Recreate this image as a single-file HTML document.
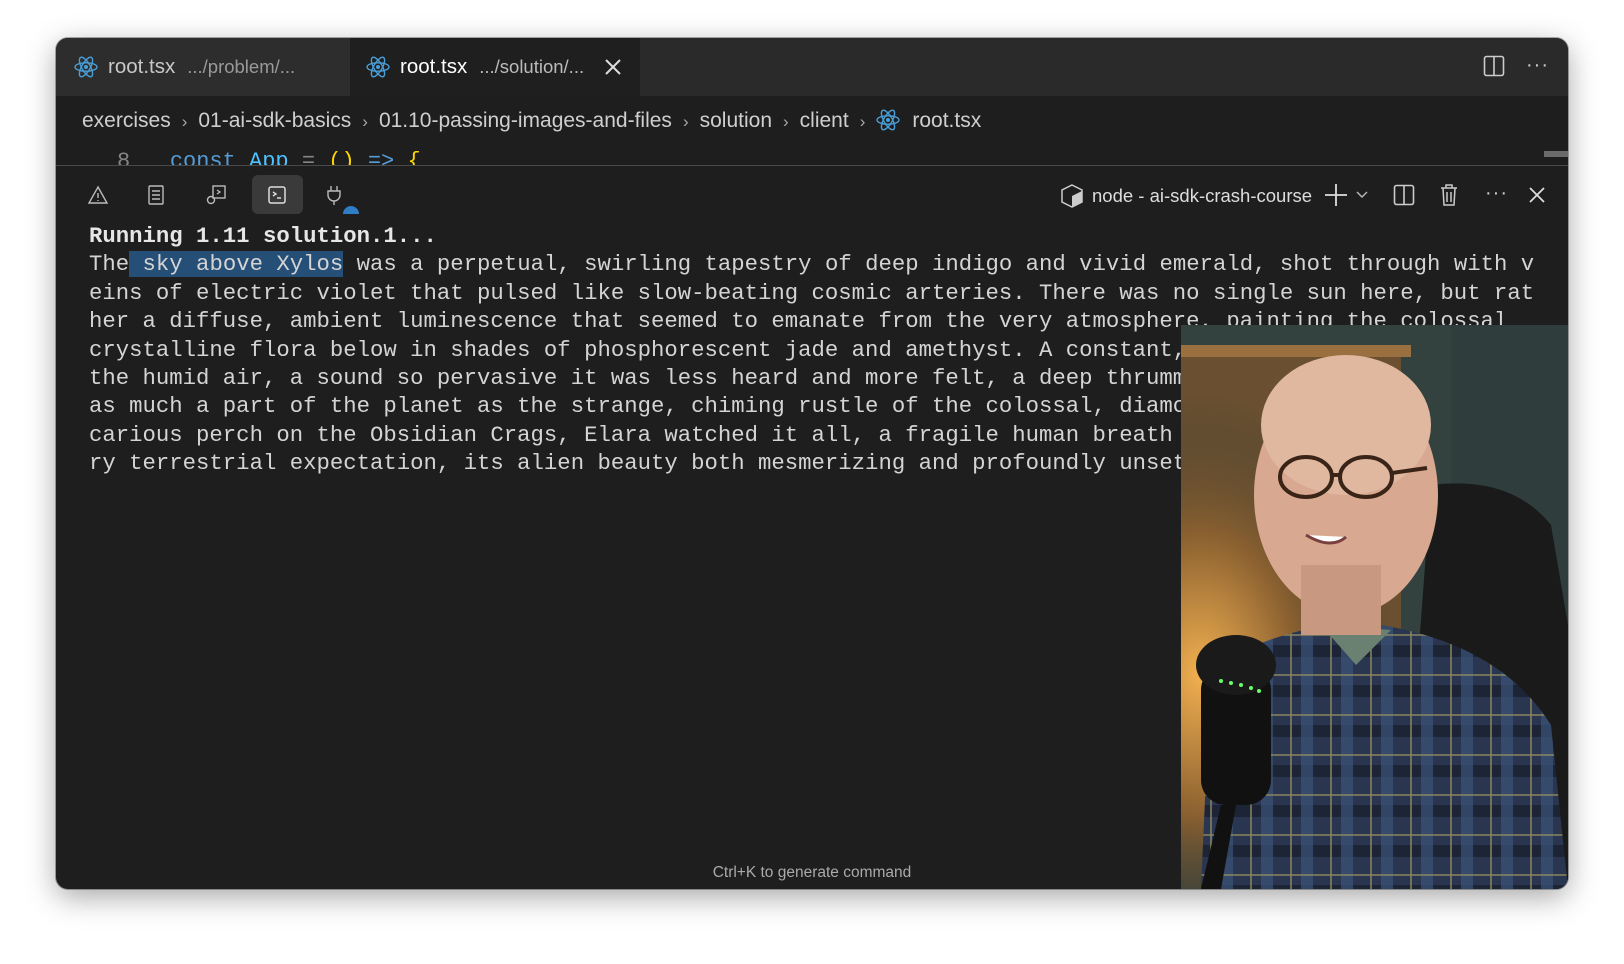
<!DOCTYPE html>
<html><head><meta charset="utf-8"><style>
*{margin:0;padding:0;box-sizing:border-box}
body{width:1624px;height:964px;background:#fff;position:relative;overflow:hidden;font-family:"Liberation Sans",sans-serif}
.win{position:absolute;left:56px;top:38px;width:1512px;height:851px;background:#1e1e1e;border-radius:12px;overflow:hidden;box-shadow:0 8px 30px rgba(0,0,0,.35),0 0 0 1px rgba(0,0,0,.3)}
.tabbar{position:absolute;left:0;top:0;width:100%;height:58px;background:#2a2a2a}
.tab{position:absolute;top:0;height:58px;display:flex;align-items:center;font-size:20.5px;color:#c8c8c8}
.tab .d{color:#9a9a9a;font-size:18.5px;margin-left:12px}
.abs{position:absolute}
.crumb{position:absolute;left:26px;top:70px;font-size:21px;color:#cfcfcf;white-space:nowrap}
.crumb span.s{color:#aaa;margin:0 11px;font-size:17px}
.mono{font-family:"Liberation Mono",monospace}
.term{position:absolute;left:33px;top:184px;font-size:22.3px;line-height:28.4px;color:#d4d4d4;white-space:pre}
.sel{background:#264f78}
</style></head><body>
<div class="win">
 <div class="tabbar"></div>
 <div class="tab" style="left:0;width:294px;background:#2d2d2d;padding-left:18px">
  <svg width="24" height="24" viewBox="-12 -12 24 24" style="margin-right:10px"><g fill="none" stroke="#4a9fd8" stroke-width="1.4"><ellipse rx="11" ry="4.2"/><ellipse rx="11" ry="4.2" transform="rotate(60)"/><ellipse rx="11" ry="4.2" transform="rotate(120)"/></g><circle r="2" fill="#4a9fd8"/></svg>root.tsx<span class="d">.../problem/...</span></div>
 <div class="tab" style="left:294px;width:290px;background:#1f1f1f;padding-left:16px;color:#fff">
  <svg width="24" height="24" viewBox="-12 -12 24 24" style="margin-right:10px"><g fill="none" stroke="#4a9fd8" stroke-width="1.4"><ellipse rx="11" ry="4.2"/><ellipse rx="11" ry="4.2" transform="rotate(60)"/><ellipse rx="11" ry="4.2" transform="rotate(120)"/></g><circle r="2" fill="#4a9fd8"/></svg>root.tsx<span class="d" style="color:#bbb">.../solution/...</span>
  <svg width="18" height="18" viewBox="0 0 18 18" style="margin-left:20px"><path d="M2 2L16 16M16 2L2 16" stroke="#ddd" stroke-width="2"/></svg></div>
 <svg class="abs" style="left:1427px;top:17px" width="22" height="22" viewBox="0 0 22 22"><rect x="1.5" y="1.5" width="19" height="19" rx="2" fill="none" stroke="#ccc" stroke-width="1.6"/><path d="M11 2v18" stroke="#ccc" stroke-width="1.6"/></svg>
 <div class="abs" style="left:1470px;top:16px;color:#ccc;font-size:20px;letter-spacing:1px">···</div>
 <div class="crumb">exercises<span class="s">›</span>01-ai-sdk-basics<span class="s">›</span>01.10-passing-images-and-files<span class="s">›</span>solution<span class="s">›</span>client<span class="s">›</span><svg width="24" height="24" viewBox="-12 -12 24 24" style="vertical-align:-5px;margin-right:12px"><g fill="none" stroke="#4a9fd8" stroke-width="1.4"><ellipse rx="11" ry="4.2"/><ellipse rx="11" ry="4.2" transform="rotate(60)"/><ellipse rx="11" ry="4.2" transform="rotate(120)"/></g><circle r="2" fill="#4a9fd8"/></svg>root.tsx</div>
 <div class="abs" style="left:0;top:96px;width:100%;height:31px;overflow:hidden">
  <div class="mono" style="position:absolute;top:15px;left:61px;font-size:22px;color:#858585;white-space:pre">8   <span style="color:#569cd6">const</span> <span style="color:#4fc1ff">App</span> = <span style="color:#ffd700">()</span> <span style="color:#569cd6">=></span> <span style="color:#ffd700">{</span></div>
 </div>
 <div class="abs" style="left:0;top:127px;width:100%;height:1px;background:#4a4a4a"></div>
 <div class="abs" style="left:1488px;top:113px;width:24px;height:6px;background:#6a6a6a"></div>
 <svg class="abs" style="left:32px;top:147px" width="20" height="20" viewBox="0 0 20 20"><path d="M10 2L19 18H1Z M10 8v5 M10 15v1" fill="none" stroke="#bbb" stroke-width="1.4"/></svg>
 <svg class="abs" style="left:91px;top:146px" width="18" height="22" viewBox="0 0 18 22"><rect x="2" y="2" width="14" height="18" rx="1" fill="none" stroke="#bbb" stroke-width="1.4"/><path d="M5 7h8M5 11h8M5 15h8" stroke="#bbb" stroke-width="1.4"/></svg>
 <svg class="abs" style="left:149px;top:146px" width="22" height="22" viewBox="0 0 22 22"><rect x="8" y="2" width="12" height="12" fill="none" stroke="#bbb" stroke-width="1.4"/><path d="M12 6l3 2-3 2" fill="none" stroke="#bbb" stroke-width="1.3"/><circle cx="6" cy="16" r="3.5" fill="none" stroke="#bbb" stroke-width="1.4"/></svg>
 <div class="abs" style="left:196px;top:137px;width:51px;height:39px;background:#3a3a3a;border-radius:6px"></div>
 <svg class="abs" style="left:210px;top:146px" width="22" height="22" viewBox="0 0 22 22"><rect x="3" y="3" width="16" height="16" rx="2" fill="none" stroke="#ddd" stroke-width="1.5"/><path d="M7 8l3 2-3 2M11 14h4" fill="none" stroke="#ddd" stroke-width="1.4"/></svg>
 <svg class="abs" style="left:268px;top:146px" width="20" height="22" viewBox="0 0 20 22"><path d="M7 2v5M13 2v5M4 7h12v4a6 6 0 0 1-12 0z M10 17v4" fill="none" stroke="#bbb" stroke-width="1.4"/></svg>
 <div class="abs" style="left:287px;top:168px;width:16px;height:16px;border-radius:50%;background:#2f7dc4"></div>
 <div class="abs" style="left:0;top:176px;width:100%;height:10px;background:#1e1e1e"></div>
 <svg class="abs" style="left:1004px;top:145px" width="24" height="26" viewBox="0 0 24 26"><path d="M12 2L22 7v12L12 24 2 19V7Z" fill="none" stroke="#ccc" stroke-width="1.5"/><path d="M12 13L22 8v11L12 24z" fill="#ccc"/></svg>
 <div class="abs" style="left:1036px;top:147px;font-size:18.5px;color:#ddd">node - ai-sdk-crash-course</div>
 <svg class="abs" style="left:1268px;top:145px" width="24" height="24"><path d="M12 1v22M1 12h22" stroke="#ddd" stroke-width="1.8"/></svg>
 <svg class="abs" style="left:1300px;top:153px" width="12" height="8"><path d="M1 1l5 5 5-5" fill="none" stroke="#bbb" stroke-width="1.4"/></svg>
 <svg class="abs" style="left:1337px;top:146px" width="22" height="22" viewBox="0 0 22 22"><rect x="1.5" y="1.5" width="19" height="19" rx="2" fill="none" stroke="#ccc" stroke-width="1.6"/><path d="M11 2v18" stroke="#ccc" stroke-width="1.6"/></svg>
 <svg class="abs" style="left:1383px;top:145px" width="20" height="24" viewBox="0 0 20 24"><path d="M2 5h16M7 5V2h6v3M4 5l1 17h10l1-17M8 9v10M12 9v10" fill="none" stroke="#ccc" stroke-width="1.5"/></svg>
 <div class="abs" style="left:1429px;top:144px;color:#ccc;font-size:20px;letter-spacing:1px">···</div>
 <svg class="abs" style="left:1473px;top:149px" width="16" height="16"><path d="M1 1L15 15M15 1L1 15" stroke="#ddd" stroke-width="1.8"/></svg>
 <div class="term mono"><b style="color:#e6e6e6">Running 1.11 solution.1...</b>
The<span class="sel"> sky above Xylos</span> was a perpetual, swirling tapestry of deep indigo and vivid emerald, shot through with v
eins of electric violet that pulsed like slow-beating cosmic arteries. There was no single sun here, but rat
her a diffuse, ambient luminescence that seemed to emanate from the very atmosphere, painting the colossal
crystalline flora below in shades of phosphorescent jade and amethyst. A constant,
the humid air, a sound so pervasive it was less heard and more felt, a deep thrumm
as much a part of the planet as the strange, chiming rustle of the colossal, diamc
carious perch on the Obsidian Crags, Elara watched it all, a fragile human breath
ry terrestrial expectation, its alien beauty both mesmerizing and profoundly unset</div>
 <div class="abs" style="left:0;width:1512px;top:826px;text-align:center;font-size:15.5px;color:#aaa">Ctrl+K to generate command</div>
 <svg class="abs" style="left:1125px;top:287px" width="387" height="564" viewBox="0 0 387 564">
  <defs><radialGradient id="lamp" cx="0.05" cy="0.62" r="0.5"><stop offset="0" stop-color="#f2b050"/><stop offset="0.5" stop-color="#8a6030"/><stop offset="1" stop-color="#3a3a30" stop-opacity="0"/></radialGradient>
  <pattern id="plaid" width="40" height="40" patternUnits="userSpaceOnUse"><rect width="40" height="40" fill="#2a3550"/><rect width="40" height="12" fill="#1c2436"/><rect width="12" height="40" fill="#3a5478" opacity=".7"/><path d="M0 30h40M30 0v40" stroke="#8a8660" stroke-width="1.5"/></pattern></defs>
  <rect width="387" height="564" fill="#33423f"/>
  <rect x="270" y="0" width="117" height="564" fill="#2f3e3d"/>
  <rect x="0" y="20" width="220" height="460" fill="#6a5030"/>
  <rect width="387" height="564" fill="url(#lamp)"/>
  <rect x="0" y="20" width="230" height="12" fill="#9a7040"/>
  <path d="M250 160 Q330 150 370 200 L387 300 L387 564 L220 564Z" fill="#1a1a1a"/>
  <path d="M30 340 Q130 290 200 300 Q320 320 370 400 L387 564 L20 564Z" fill="url(#plaid)"/>
  <path d="M140 300 L175 340 L210 305Z" fill="#6a8070"/>
  <ellipse cx="165" cy="170" rx="92" ry="120" fill="#d8a890"/>
  <ellipse cx="165" cy="100" rx="85" ry="70" fill="#e0b8a0"/>
  <rect x="120" y="240" width="80" height="70" fill="#c89880"/>
  <g fill="none" stroke="#3a2418" stroke-width="4"><ellipse cx="125" cy="152" rx="26" ry="20"/><ellipse cx="185" cy="152" rx="26" ry="20"/><path d="M151 150h8M211 148l35-5"/></g>
  <path d="M125 210 Q150 225 165 212" fill="#fff" stroke="#7a4040" stroke-width="3"/>
  <rect x="20" y="340" width="70" height="140" rx="25" fill="#111"/>
  <ellipse cx="55" cy="340" rx="40" ry="30" fill="#1a1a1a"/>
  <path d="M40 480 L20 564 L40 564 L55 480Z" fill="#111"/>
  <g fill="#6f6"><circle cx="40" cy="356" r="2"/><circle cx="50" cy="358" r="2"/><circle cx="60" cy="360" r="2"/><circle cx="70" cy="363" r="2"/><circle cx="78" cy="366" r="2"/></g>
 </svg>
</div>
</body></html>
